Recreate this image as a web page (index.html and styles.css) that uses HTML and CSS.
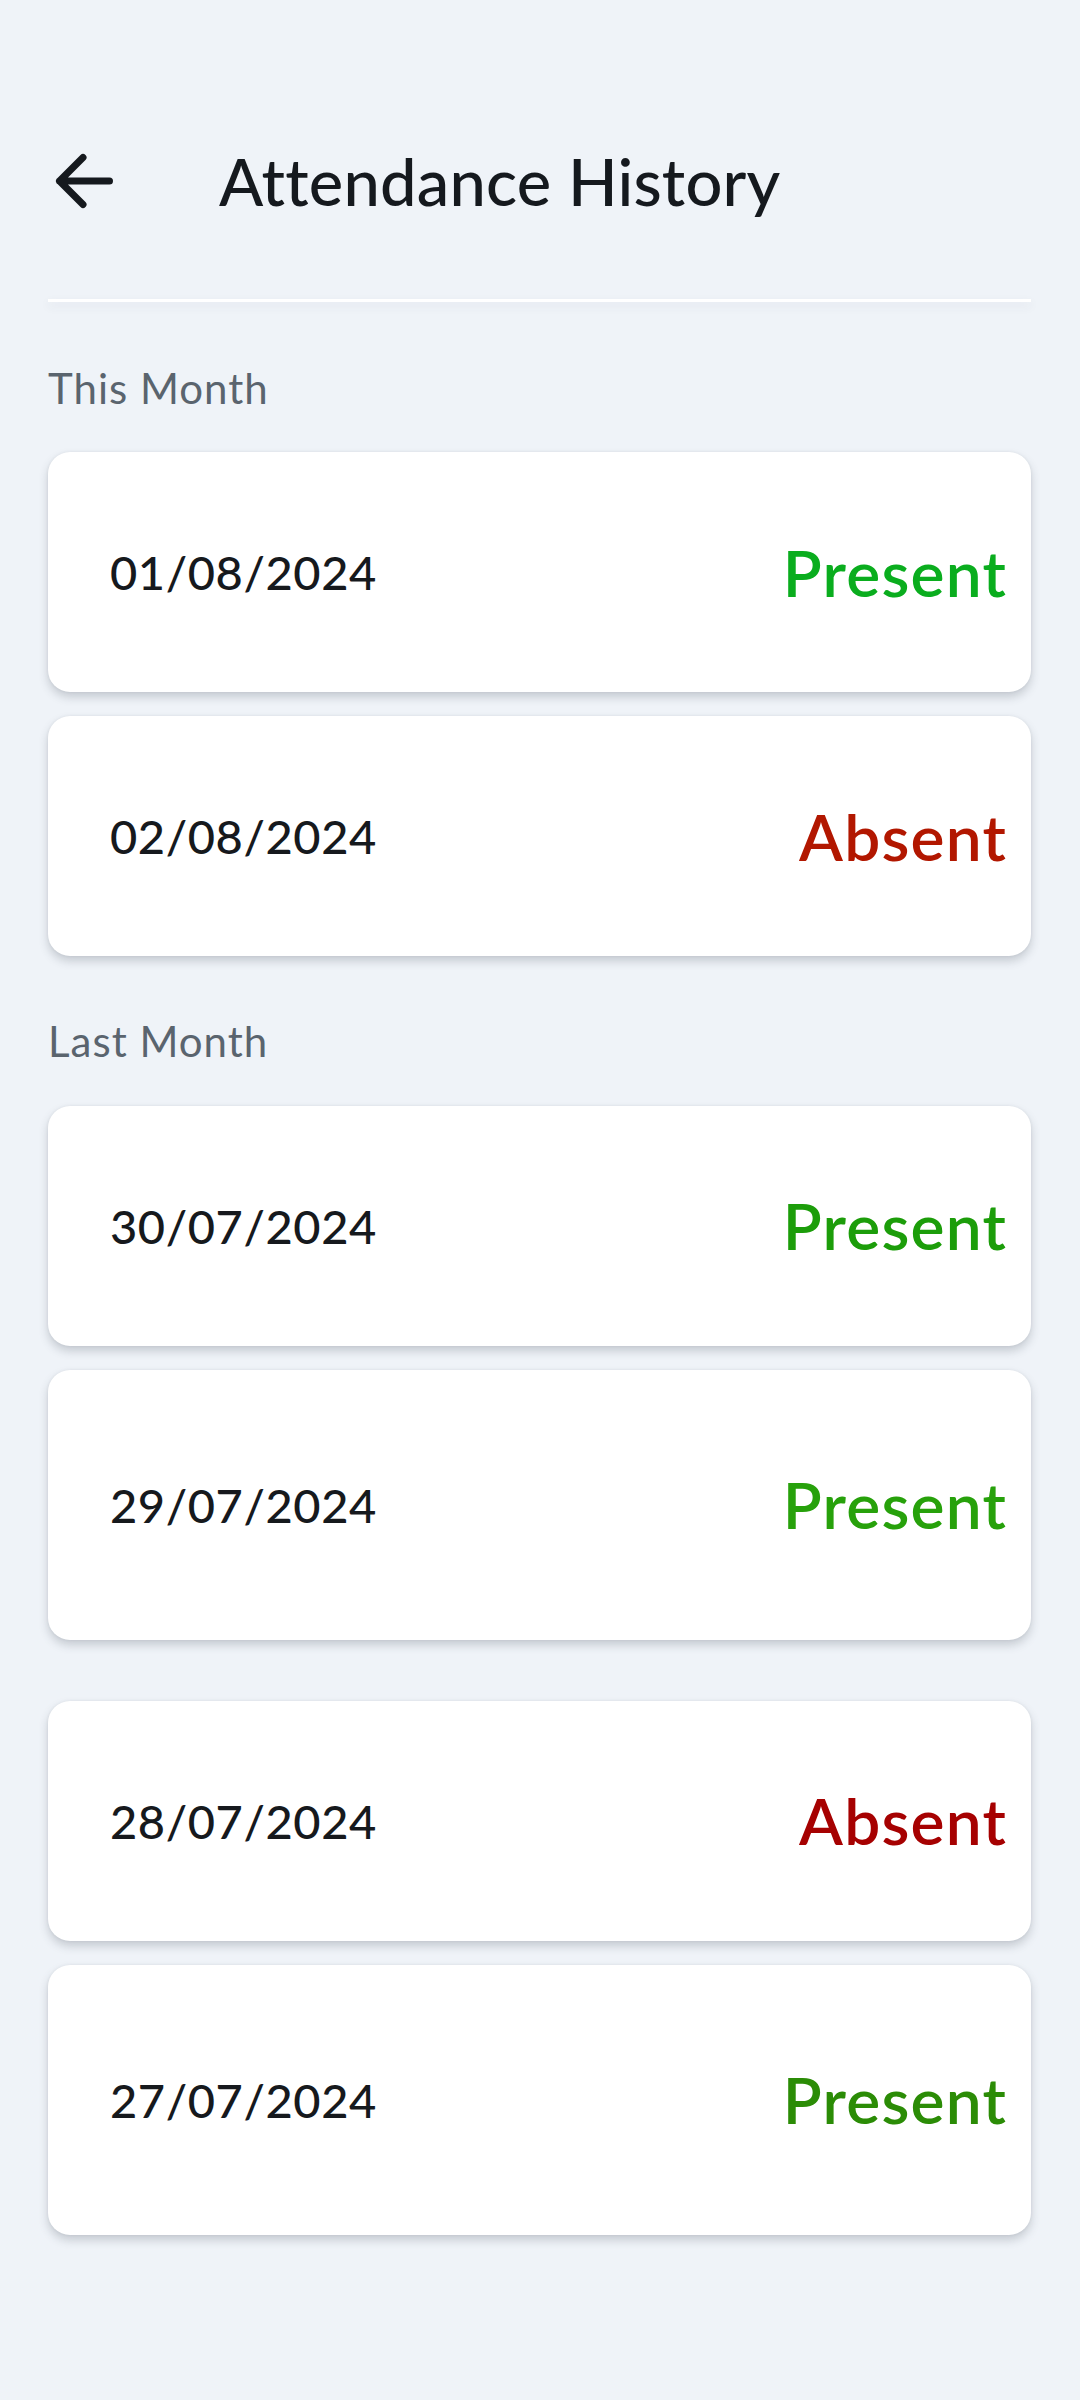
FILE: index.html
```html
<!DOCTYPE html>
<html lang="en">
<head>
<meta charset="utf-8">
<title>Attendance History</title>
<link rel="stylesheet" href="styles.css">
</head>
<body>
<div class="screen">
  <header class="header">
    <svg class="back" viewBox="0 0 72 72" width="72" height="72" aria-hidden="true">
      <path d="M61.5 36H11.5M35 12.5L11.5 36L35 59.5" fill="none" stroke="#15191e" stroke-width="7" stroke-linecap="round" stroke-linejoin="round"/>
    </svg>
    <h1 class="title">Attendance History</h1>
  </header>
  <div class="divider"></div>

  <section class="section">
    <h2 class="section-label">This Month</h2>
    <div class="list">
      <div class="card"><span class="date">01/08/2024</span><span class="status present-1">Present</span></div>
      <div class="card"><span class="date">02/08/2024</span><span class="status absent-1">Absent</span></div>
    </div>
  </section>

  <section class="section section--last">
    <h2 class="section-label">Last Month</h2>
    <div class="list">
      <div class="card"><span class="date">30/07/2024</span><span class="status present-2">Present</span></div>
      <div class="card card--tall"><span class="date">29/07/2024</span><span class="status present-3">Present</span></div>
      <div class="card card--spaced"><span class="date">28/07/2024</span><span class="status absent-2">Absent</span></div>
      <div class="card card--tall"><span class="date">27/07/2024</span><span class="status present-4">Present</span></div>
    </div>
  </section>
</div>
</body>
</html>
```
FILE: styles.css
```css
html, body {
  margin: 0;
  padding: 0;
}
body {
  background: #eff3f8;
  font-family: Lato, "Noto Sans", sans-serif;
  color: #15191e;
  width: 1080px;
  min-height: 2400px;
}
.screen {
  padding: 121px 49px 0 48px;
}
.header {
  display: flex;
  align-items: center;
  height: 120px;
}
.back {
  display: block;
  flex: none;
}
.title {
  margin: 0 0 0 99px;
  font-size: 65px;
  font-weight: 500;
  line-height: normal;
  color: #15191e;
  letter-spacing: 0.2px;
}
.divider {
  margin-top: 58px;
  height: 3px;
  background: #ffffff;
  box-shadow: 0 4px 10px rgba(60, 70, 85, 0.10);
}
.section {
  margin-top: 61px;
}
.section--last {
  margin-top: 60px;
}
.section-label {
  margin: 0 0 39px 0;
  font-size: 42px;
  font-weight: 400;
  line-height: 1.2;
  letter-spacing: 1px;
  color: #5a646e;
}
.list {
  display: flex;
  flex-direction: column;
  gap: 24px;
}
.card {
  display: flex;
  align-items: center;
  justify-content: space-between;
  height: 240px;
  padding: 0 24px 0 62px;
  background: #ffffff;
  border-radius: 22px;
  box-shadow: 0 5px 10px rgba(50, 60, 75, 0.22), 0 0 3px rgba(50, 60, 75, 0.08);
}
.card--tall {
  height: 270px;
}
.card--spaced {
  margin-top: 37px;
}
.date {
  font-size: 47px;
  font-weight: 500;
  letter-spacing: 0.6px;
  color: #16191d;
}
.status {
  font-size: 64px;
  font-weight: 600;
  letter-spacing: 1.2px;
}
.present-1 { color: #0aad1e; }
.present-2 { color: #1c9d0a; }
.present-3 { color: #27a10b; }
.present-4 { color: #2b8c06; }
.absent-1 { color: #b21700; }
.absent-2 { color: #a60101; }
```
